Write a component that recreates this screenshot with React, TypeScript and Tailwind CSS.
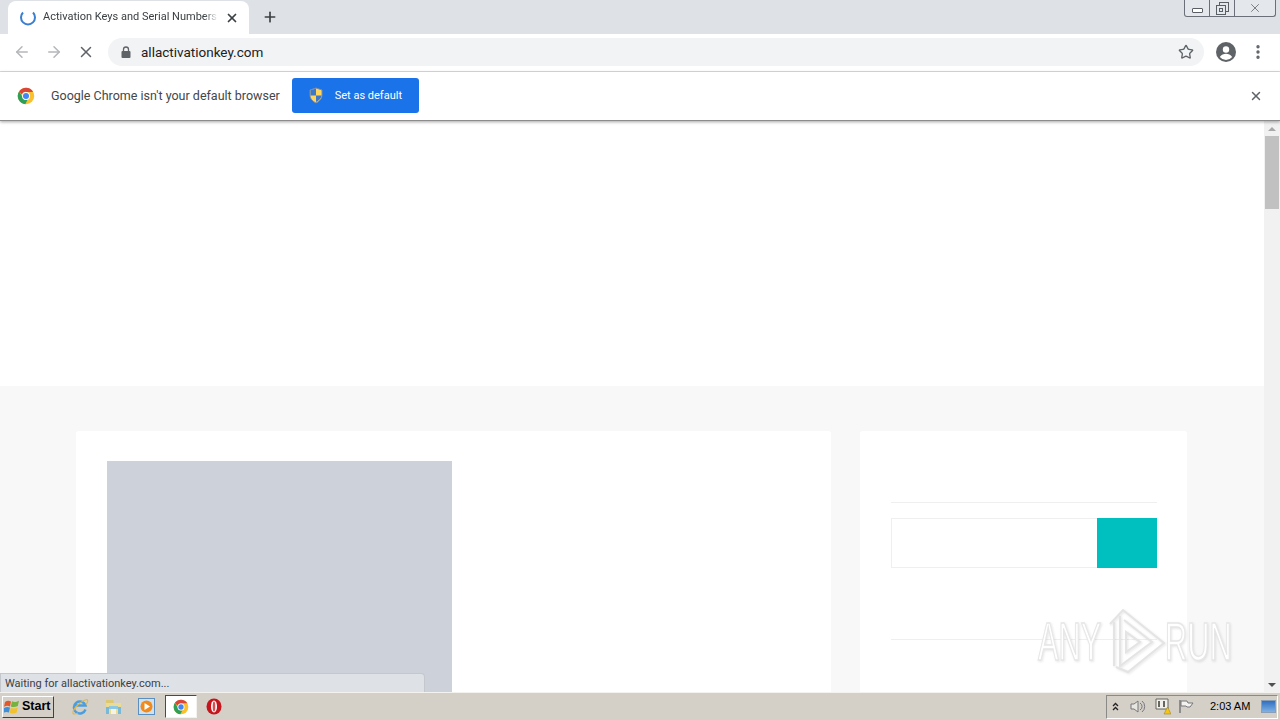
import { ArrowLeft, ArrowRight, MoreVertical, Plus, Star, X } from "lucide-react";

function ChromeLogo({ size }: { size: number }) {
  return (
    <svg width={size} height={size} viewBox="0 0 48 48">
      <circle cx="24" cy="24" r="22" fill="#fbc02d" />
      <path d="M24 2a22 22 0 0 1 19 11H24a11 11 0 0 0-10.500 7.500L5.800 11.600A22 22 0 0 1 24 2z" fill="#d8453a" />
      <path d="M5.800 11.600l9.500 16.500A11 11 0 0 0 28 34.300L22 46A22 22 0 0 1 5.800 11.600z" fill="#2f9e57" />
      <circle cx="24" cy="24" r="10.500" fill="#fff" />
      <circle cx="24" cy="24" r="8" fill="#4285f4" />
    </svg>
  );
}

function Shield() {
  return (
    <svg width="16" height="17" viewBox="0 0 16 17">
      <path d="M8 1l6 2v5c0 4-3 6.500-6 8-3-1.500-6-4-6-8V3z" fill="#ffd75e" stroke="#7a8aa8" strokeWidth="1" />
      <path d="M8 1.500v7H2.500V3.300zM8 8.500h5.500c-.3 3.200-3 5.200-5.500 6.500z" fill="#3f78c9" />
    </svg>
  );
}

function TaskIcons() {
  return (
    <div className="flex items-center h-full">
      <div className="ml-[16px] w-[20px] flex justify-center">
        <svg width="18" height="18" viewBox="0 0 18 18">
          <path d="M14.500 11.500A6 6 0 1 1 14.500 7.500H4.500" fill="none" stroke="#4a9ee0" strokeWidth="2.400" />
          <path d="M2 15.500C1 12 9 3 16 1.500c1.500 1 .5 3-1 5M2 15.500c1 1 3 .5 5-.5" fill="none" stroke="#e3b544" strokeWidth="1.100" />
        </svg>
      </div>
      <div className="ml-[13px] w-[20px] flex justify-center">
        <svg width="17" height="17" viewBox="0 0 17 17">
          <path d="M1 5h15v11H1z" fill="#ecdc93" />
          <path d="M1 2h7l1 3H1z" fill="#dcc873" />
          <path d="M1 9h3v7H1zM13 9h3v7h-3z" fill="#78b9d9" />
          <path d="M4 8h9v3H4z" fill="#8cc8e4" />
          <path d="M6 11h5v5H6z" fill="#f6f3e2" />
        </svg>
      </div>
      <div className="ml-[14px] w-[18px] flex justify-center">
        <svg width="17" height="17" viewBox="0 0 17 17">
          <rect x="0.500" y="0.500" width="16" height="16" fill="#cfe0ee" stroke="#5a8fc0" />
          <circle cx="8.500" cy="8.500" r="6" fill="#f08a1c" />
          <path d="M6.500 5v7l5.500-3.500z" fill="#fff" />
        </svg>
      </div>
      <div className="ml-[10px] w-[32px] h-[23px] bg-white border border-t-[#4a4a4a] border-l-[#4a4a4a] border-r-[#f4f2ee] border-b-[#f4f2ee] flex items-center justify-center">
        <ChromeLogo size={16} />
      </div>
      <div className="ml-[9px] w-[16px] flex justify-center">
        <svg width="16" height="17" viewBox="0 0 16 17">
          <ellipse cx="8" cy="8.500" rx="7.500" ry="8" fill="#c5161d" />
          <ellipse cx="8" cy="8.500" rx="3" ry="6" fill="#fff" />
          <ellipse cx="8" cy="8.500" rx="1.300" ry="5" fill="#d94c50" />
        </svg>
      </div>
    </div>
  );
}

export default function App() {
  return (
    <div className="w-[1280px] h-[720px] overflow-hidden relative flex flex-col font-['Roboto',sans-serif] bg-white">
      {/* tab strip */}
      <div className="h-[34px] shrink-0 bg-[#dee1e6] flex">
        <div className="ml-[8px] mt-[1px] w-[241px] h-[33px] bg-white rounded-t-[8px] flex items-center">
          <svg className="ml-[12px]" width="16" height="16" viewBox="0 0 16 16">
            <path d="M3 2.500a7 7 0 1 0 10 0" fill="none" stroke="#3a7fd0" strokeWidth="2" />
          </svg>
          <div className="ml-[7px] w-[175px] whitespace-nowrap text-[11px] text-[#3c4043] [mask-image:linear-gradient(to_right,black_92%,transparent)]">Activation Keys and Serial Numbers f</div>
          <X className="ml-[7px] text-[#3c4043]" size={14} strokeWidth={3} />
        </div>
        <Plus className="ml-[13px] mt-[9px] text-[#3c4043]" size={16} strokeWidth={2.500} />
        <div className="ml-auto mr-[4px] w-[92px] h-[17px] flex border border-t-0 border-[#6b7078] rounded-b-[3px] bg-[#e4e7ec]">
          <div className="w-[25px] border-r border-[#6b7078] flex items-center justify-center">
            <div className="w-[11px] h-[5px] mt-[4px] border border-[#5a5f66] rounded-[1px] bg-white" />
          </div>
          <div className="w-[25px] border-r border-[#6b7078] flex items-center justify-center">
            <svg width="13" height="13" viewBox="0 0 13 13" fill="none" stroke="#5a5f66">
              <rect x="3.500" y="0.500" width="9" height="9" />
              <rect x="0.500" y="3.500" width="9" height="9" fill="#e4e7ec" />
              <rect x="3.500" y="6.500" width="3" height="3" />
            </svg>
          </div>
          <div className="flex-1 flex items-center justify-center">
            <X className="text-[#6b7078]" size={14} strokeWidth={1.500} />
          </div>
        </div>
      </div>

      {/* toolbar */}
      <div className="h-[38px] shrink-0 bg-white border-b border-[#dcdcdc] pb-[1px] flex items-center">
        <ArrowLeft className="ml-[13px] text-[#b4b6ba]" size={18} strokeWidth={2} />
        <ArrowRight className="ml-[14px] text-[#b4b6ba]" size={18} strokeWidth={2} />
        <X className="ml-[14px] text-[#5f6368]" size={18} strokeWidth={2} />
        <div className="ml-[13px] w-[1096px] h-[28px] rounded-full bg-[#f1f3f4] flex items-center">
          <svg className="ml-[13px]" width="10" height="12" viewBox="0 0 10 12">
            <path d="M2.500 5V3.500a2.500 2.500 0 0 1 5 0V5" fill="none" stroke="#5f6368" strokeWidth="1.300" />
            <rect x="0.500" y="5" width="9" height="7" rx="1" fill="#5f6368" />
          </svg>
          <div className="ml-[10px] text-[13.500px] text-[#202124]">allactivationkey.com</div>
          <Star className="ml-auto mr-[10px] text-[#5f6368]" size={16} strokeWidth={2} />
        </div>
        <svg className="ml-[12px]" width="20" height="20" viewBox="0 0 20 20">
          <circle cx="10" cy="10" r="10" fill="#5f6368" />
          <circle cx="10" cy="7.500" r="3.200" fill="#fff" />
          <path d="M3.800 15c1.500-2.500 4-3.200 6.200-3.200s4.700.7 6.200 3.200a8 8 0 0 1-12.400 0z" fill="#fff" />
        </svg>
        <MoreVertical className="ml-[13px] text-[#5f6368]" size={18} strokeWidth={2.500} />
      </div>

      {/* default browser bar */}
      <div className="h-[49px] shrink-0 bg-white border-b border-[#8c8c8c] shadow-[0_1px_3px_rgba(0,0,0,0.35)] z-10 pb-[1px] flex items-center">
        <div className="ml-[17px]"><ChromeLogo size={18} /></div>
        <div className="ml-[16px] mt-[1px] text-[12.500px] text-[#444649]">Google Chrome isn't your default browser</div>
        <div className="ml-[12px] w-[127px] h-[35px] rounded-[3px] bg-[#1a73e8] flex items-center text-white text-[11px]">
          <div className="ml-[16px]"><Shield /></div>
          <div className="ml-[11px] mt-[1px]">Set as default</div>
        </div>
        <X className="ml-auto mr-[17px] text-[#5f6368]" size={14} strokeWidth={2.500} />
      </div>

      {/* page */}
      <div className="flex-1 min-h-0 flex">
        <div className="flex-1 min-w-0 overflow-hidden flex flex-col">
          <div className="h-[265px] shrink-0 bg-white" />
          <div className="flex-1 bg-[#f8f8f8] pt-[45px] pl-[76px] flex gap-[29px] items-start">
            <div className="w-[755px] h-[400px] shrink-0 bg-white rounded-[3px] pt-[30px] pl-[31px]">
              <div className="w-[345px] h-[300px] bg-[#cdd1da]" />
            </div>
            <div className="w-[327px] h-[400px] shrink-0 bg-white rounded-[3px] pl-[31px] pr-[30px] pt-[71px]">
              <div className="border-t border-[#efefef] pt-[15px]">
                <div className="flex h-[50px]">
                  <div className="flex-1 border border-[#efefef] border-r-0" />
                  <div className="w-[60px] bg-[#00bfbf]" />
                </div>
              </div>
              <div className="mt-[71px] border-t border-[#efefef]" />
            </div>
          </div>
        </div>
        <div className="w-[16px] shrink-0 bg-[#f1f1f1] flex flex-col">
          <div className="h-[15px] flex items-center justify-center">
            <div className="w-0 h-0 border-x-[4px] border-x-transparent border-b-[4px] border-b-[#a8a8a8]" />
          </div>
          <div className="mx-[1px] h-[73px] bg-[#c1c1c1]" />
          <div className="mt-auto h-[15px] flex items-center justify-center">
            <div className="w-0 h-0 border-x-[4px] border-x-transparent border-t-[4px] border-t-[#505050]" />
          </div>
        </div>
      </div>

      {/* status bubble */}
      <div className="absolute left-0 bottom-[28px] w-[425px] h-[19px] pt-[2px] bg-[#dee1e6] border border-b-0 border-[#c4c7cc] rounded-tr-[4px] flex items-center pl-[4px] text-[11px] text-[#3c4043]">
        Waiting for allactivationkey.com...
      </div>

      {/* watermark */}
      <div className="absolute left-[1038px] top-[608px] flex items-center h-[66px] text-[53px] leading-none text-white font-['Liberation_Sans',sans-serif] [-webkit-text-stroke:1.5px_#e6e6e6] [filter:drop-shadow(1px_1px_1px_rgba(0,0,0,0.1))]">
        <span className="w-[70px] scale-x-[0.58] origin-left whitespace-nowrap">ANY</span>
        <svg width="58" height="66" viewBox="0 0 58 66" fill="none" stroke="#e4e4e4" strokeWidth="2">
          <path d="M2 16L15 2l41 33-36 29-12-5" />
          <path d="M6 14v44M12 8v50l32-24L16 12" />
          <path d="M18 24v20l14-10z" />
        </svg>
        <span className="ml-[-1px] w-[67px] scale-x-[0.58] origin-left whitespace-nowrap">RUN</span>
      </div>

      {/* taskbar */}
      <div className="h-[28px] shrink-0 bg-[#d4d0c8] border-t border-[#f4f2ee] flex items-center font-['Liberation_Sans',sans-serif]">
        <div className="ml-[2px] w-[52px] h-[22px] bg-[#d4d0c8] border border-t-white border-l-white border-r-[#404040] border-b-[#404040] flex items-center text-[12.500px] font-bold text-black">
          <svg className="ml-[1px]" width="17" height="17" viewBox="0 0 17 17">
            <path d="M1 4c2-1.500 4-1.500 6-.5l-1 5c-2-1-3.500-1-6 .3z" fill="#e2582a" />
            <path d="M8 3.300c2 1 4 1 7-.5L13.800 8c-2.500 1.200-5 1.200-7 .4z" fill="#76b23f" />
            <path d="M0 10c2-1.200 4-1.300 6-.4l-1 5c-2-1-3.500-1-6 .3z" fill="#3f8fd8" />
            <path d="M6.700 9.800c2 1 4.500 1 7-.4l-1 5c-2.500 1.300-5 1.300-7 .4z" fill="#f2c12e" />
          </svg>
          <span className="ml-[1px]">Start</span>
        </div>
        <TaskIcons />
        <div className="ml-auto mr-[2px] w-[172px] h-[24px] border border-t-[#8a8a86] border-l-[#8a8a86] border-r-white border-b-white flex items-center text-[11px] text-black">
          <svg className="ml-[5px]" width="7" height="9" viewBox="0 0 7 9" fill="none" stroke="#222" strokeWidth="1.300">
            <path d="M1 4l2.500-2.500L6 4M1 8l2.500-2.500L6 8" />
          </svg>
          <svg className="ml-[11px]" width="17" height="15" viewBox="0 0 17 15" fill="none" stroke="#77777a">
            <path d="M1 5h3l4-3v11l-4-3H1z" fill="#e8e6e0" />
            <path d="M10 4a4 4 0 0 1 0 7M12 2a7 7 0 0 1 0 11" />
          </svg>
          <svg className="ml-[7px]" width="17" height="17" viewBox="0 0 17 17">
            <path d="M2 1h12v10H2z" fill="#f2f0ea" stroke="#66665f" />
            <path d="M5 3v6M10 3v6" stroke="#66665f" strokeWidth="2" />
            <path d="M10 16l3.500-7 3.500 7z" fill="#f5c518" stroke="#9a7a00" strokeWidth="0.500" />
          </svg>
          <svg className="ml-[7px]" width="17" height="15" viewBox="0 0 17 15" fill="none" stroke="#77777a">
            <path d="M2 1v13" strokeWidth="1.500" />
            <path d="M3 2h6l1 2h5l-3 4H9l-1-1H3z" fill="#f4f2ee" />
          </svg>
          <span className="ml-[15px] whitespace-nowrap">2:03 AM</span>
          <div className="ml-[11px] w-[15px] h-[13px] bg-gradient-to-b from-[#2f6fc0] to-[#7fb2e4] border border-[#8a9fb5]" />
        </div>
      </div>
    </div>
  );
}
